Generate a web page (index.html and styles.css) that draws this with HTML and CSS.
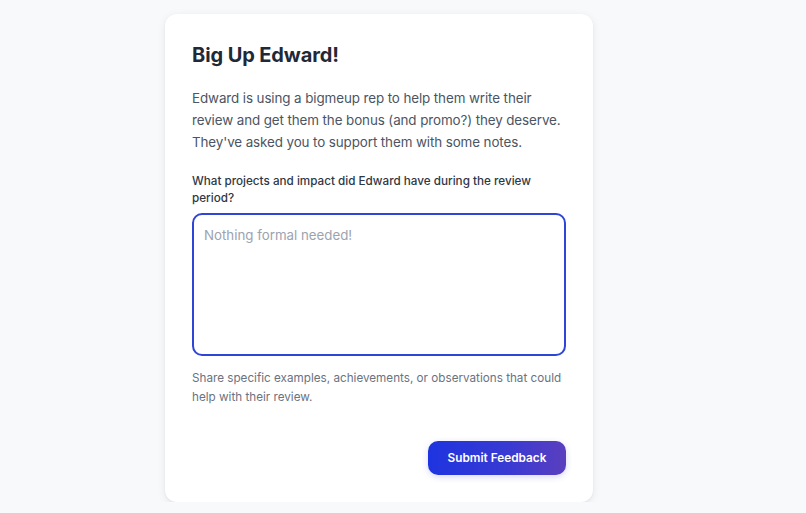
FILE: index.html
```html
<!DOCTYPE html>
<html lang="en">
<head>
<meta charset="utf-8">
<link rel="stylesheet" href="styles.css">
</head>
<body>
<main class="page">
  <section class="card">
    <h1 class="title">Big Up Edward!</h1>
    <p class="intro">Edward is using a bigmeup rep to help them write their review and get them the bonus (and promo?) they deserve. They've asked you to support them with some notes.</p>
    <label class="label" for="notes">What projects and impact did Edward have during the review period?</label>
    <textarea id="notes" class="field" placeholder="Nothing formal needed!"></textarea>
    <p class="help">Share specific examples, achievements, or observations that could help with their review.</p>
    <div class="actions">
      <button class="submit" type="button">Submit Feedback</button>
    </div>
  </section>
</main>
</body>
</html>
```

FILE: styles.css
```css
html, body {
  margin: 0;
  padding: 0;
  background: #f8f9fb;
  font-family: Inter, "Noto Sans", sans-serif;
}
.page {
  padding: 14px 0 0 165px;
}
.card {
  width: 428px;
  box-sizing: border-box;
  background: #ffffff;
  border-radius: 12px;
  box-shadow: 0 2px 8px rgba(15, 23, 42, 0.08), 0 1px 2px rgba(15, 23, 42, 0.05);
  padding: 27px;
  display: flex;
  flex-direction: column;
}
.title {
  margin: 0;
  font-size: 20px;
  line-height: 28px;
  font-weight: 700;
  color: #1f2937;
  letter-spacing: -0.1px;
}
.intro {
  margin: 18px 0 0 0;
  font-size: 13.4px;
  line-height: 22px;
  letter-spacing: -0.1px;
  color: #4b5563;
}
.label {
  margin-top: 20px;
  font-size: 11.7px;
  line-height: 17px;
  font-weight: 500;
  color: #2f3745;
}
.field {
  margin-top: 6px;
  height: 143px;
  box-sizing: border-box;
  border: 2px solid #2f45d6;
  border-radius: 10px;
  padding: 9px 10px;
  font-family: inherit;
  font-size: 13.3px;
  line-height: 22px;
  color: #111827;
  resize: none;
  outline: none;
}
.field::placeholder {
  color: #9ca3af;
}
.help {
  margin: 13px 0 0 0;
  font-size: 11.7px;
  line-height: 19px;
  color: #6b7280;
}
.actions {
  margin-top: 34px;
  display: flex;
  justify-content: flex-end;
}
.submit {
  width: 138px;
  height: 34px;
  border: none;
  border-radius: 10px;
  background: linear-gradient(90deg, #1e34e0 0%, #3a3ad2 60%, #5b3fbf 100%);
  color: #ffffff;
  font-family: inherit;
  font-size: 11.8px;
  font-weight: 600;
  box-shadow: 0 2px 6px rgba(59, 59, 200, 0.2);
}
```
